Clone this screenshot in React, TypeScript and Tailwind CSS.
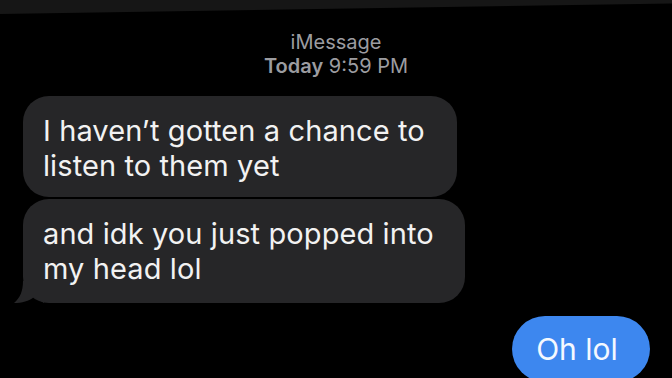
const lines1 = ["I haven\u2019t gotten a chance to", "listen to them yet"];
const lines2 = ["and idk you just popped into", "my head lol"];

const Tail = () => (
  <svg
    className="absolute left-[-9px] bottom-0"
    width="30"
    height="22"
    viewBox="0 0 30 22"
  >
    <path d="M9 0 C9 10 6 17 0 22 C8 22 15 20 20 16 L30 22 L30 0 Z" fill="#262628" />
  </svg>
);

const App = () => (
  <div className="w-[672px] h-[378px] overflow-hidden bg-black font-['Inter','Liberation_Sans',sans-serif]">
    <div className="h-[14px] bg-[#161616] [clip-path:polygon(0_0,100%_0,100%_25%,0_100%)]" />

    <div className="mt-[16px] text-center text-[20px] leading-[24px] text-[#9c9ca0]">
      <p>iMessage</p>
      <p>
        <span className="font-semibold">Today</span> 9:59 PM
      </p>
    </div>

    <div className="mt-[18px] pl-[23px] flex flex-col gap-[2px] text-[29px] leading-[35px] text-[#f2f2f2] tracking-[0.1px]">
      <div className="w-[434px] rounded-[26px] bg-[#262628] pl-[20px] pt-[17px] pb-[14px]">
        {lines1.map((l) => (
          <p key={l} className="whitespace-nowrap">{l}</p>
        ))}
      </div>
      <div className="relative w-[442px] rounded-[26px] bg-[#262628] pl-[20px] pt-[17px] pb-[17px]">
        {lines2.map((l) => (
          <p key={l} className="relative whitespace-nowrap">{l}</p>
        ))}
        <Tail />
      </div>
    </div>

    <div className="mt-[13px] pr-[22px] flex justify-end">
      <div className="w-[138px] h-[66px] shrink-0 rounded-full bg-[#3d87ef] text-[#f4f8ff] text-[30px] flex items-center justify-center pr-[8px]">
        Oh lol
      </div>
    </div>
  </div>
);

export default App;
